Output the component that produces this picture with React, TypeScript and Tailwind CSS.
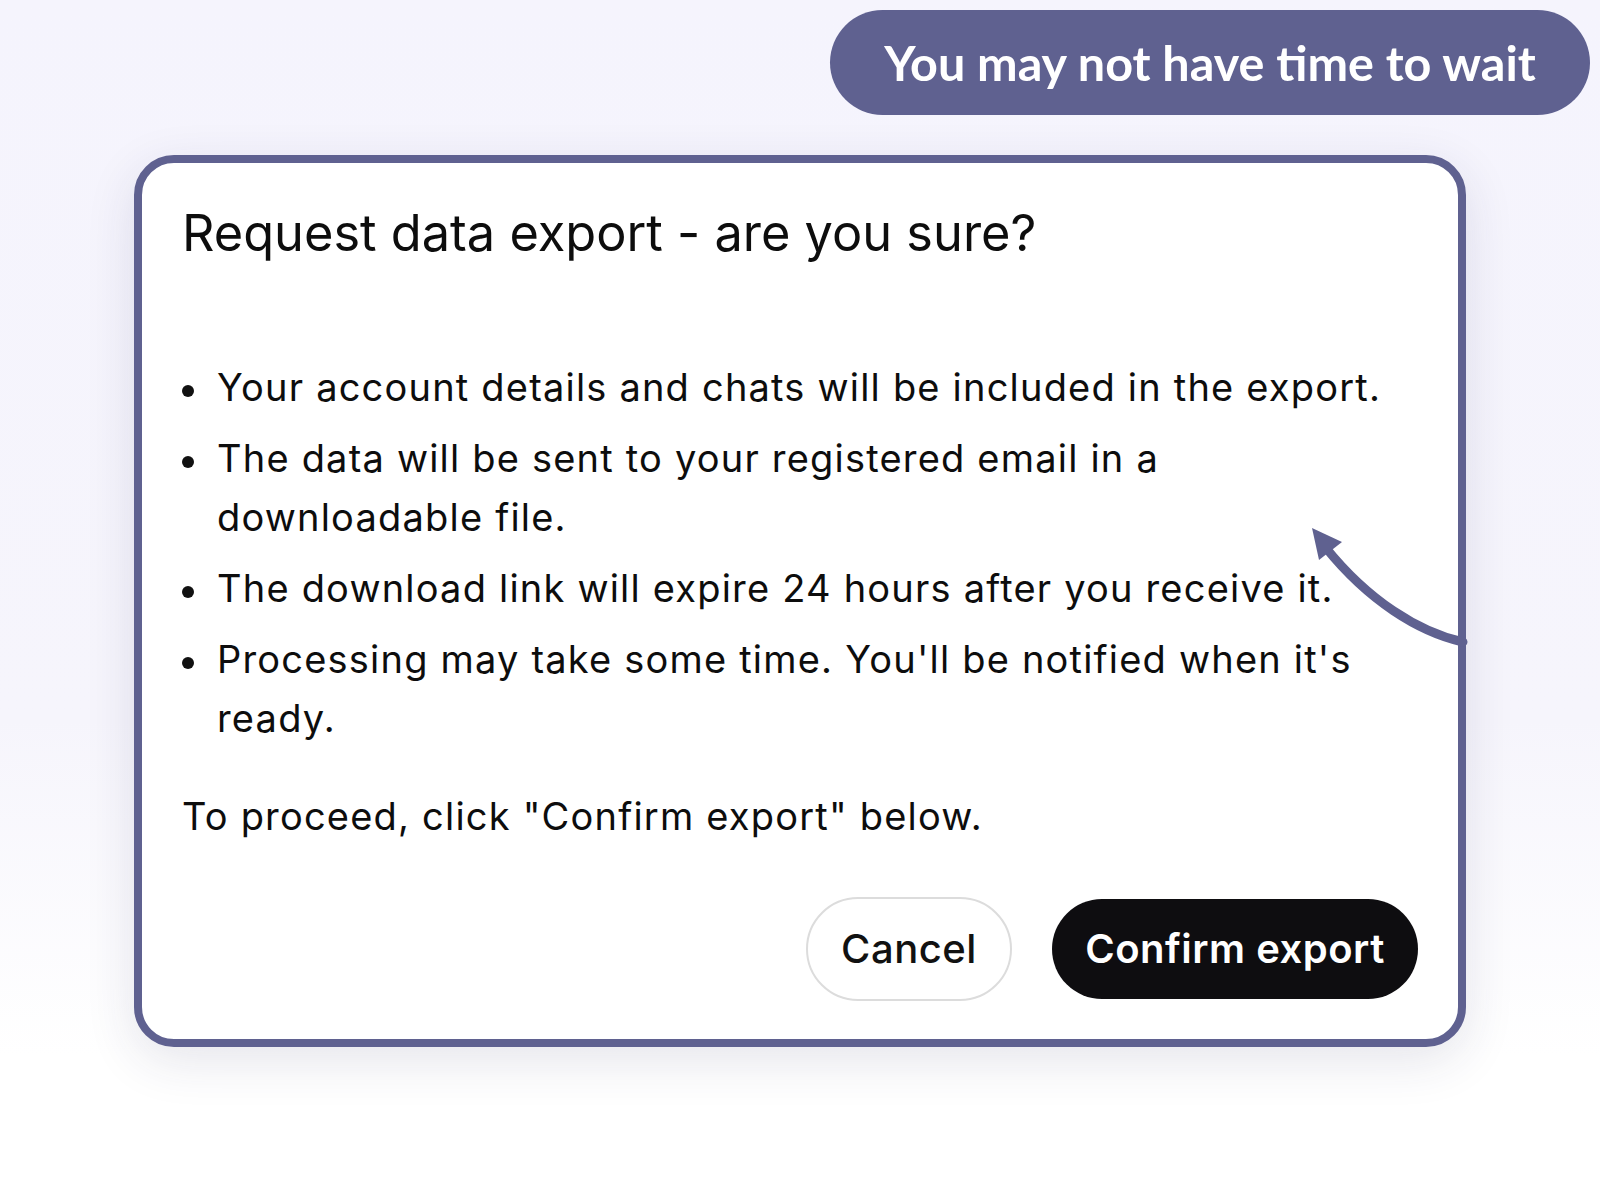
import React from 'react';

const bullets = [
  { text: 'Your account details and chats will be included in the export.', w: '' },
  { text: 'The data will be sent to your registered email in a downloadable file.', w: 'max-w-[960px]' },
  { text: 'The download link will expire 24 hours after you receive it.', w: '' },
  { text: "Processing may take some time. You'll be notified when it's ready.", w: 'max-w-[1160px]' },
];

export default function App() {
  return (
    <div className="relative w-[1600px] h-[1200px] overflow-hidden bg-[linear-gradient(to_bottom,#f5f4fd_0%,#f6f5fc_60%,#ffffff_88%)] font-['Inter',sans-serif]">
      <div className="flex justify-end pt-[10px] pr-[10px]">
        <div className="flex h-[105px] w-[760px] items-center justify-center rounded-full bg-[#5f6190] font-['Lato',sans-serif] text-[48.5px] font-bold text-white">
          You may not have time to wait
        </div>
      </div>

      <div className="ml-[134px] mt-[40px] w-[1332px] rounded-[40px] border-[8px] border-[#5f6190] bg-white px-[40px] pt-[40px] pb-[38px] shadow-[0_14px_50px_rgba(40,40,90,0.12)]">
        <h2 className="text-[50.5px] font-normal leading-[60px] text-[#0d0d0d]">
          Request data export - are you sure?
        </h2>

        <ul className="mt-[95px] flex w-[1215px] flex-col gap-[12px]">
          {bullets.map((b) => (
            <li key={b.text} className="flex text-[38px] leading-[59px] tracking-[1.2px] text-[#0d0d0d]">
              <span className="flex h-[59px] w-[35px] shrink-0 items-center">
                <span className="mt-[6px] h-[12px] w-[12px] rounded-full bg-[#111]" />
              </span>
              <span className={b.w}>{b.text}</span>
            </li>
          ))}
        </ul>

        <p className="mt-[39px] text-[38px] leading-[59px] tracking-[1.2px] text-[#0d0d0d]">
          To proceed, click "Confirm export" below.
        </p>

        <div className="mt-[51px] flex justify-end gap-[40px]">
          <button className="h-[104px] w-[206px] rounded-full border-2 border-[#dcdcdc] bg-white text-[40px] font-medium tracking-[0.5px] text-[#111]">
            Cancel
          </button>
          <button className="my-[2px] h-[100px] w-[366px] rounded-full bg-[#0e0d10] text-[40px] font-semibold tracking-[0.5px] text-white">
            Confirm export
          </button>
        </div>
      </div>

      <svg className="absolute left-[1290px] top-[510px]" width="190" height="150" viewBox="1290 510 190 150">
        <path d="M1463 642 C1418 632 1368 600 1326 548" fill="none" stroke="#5f6190" strokeWidth="9" strokeLinecap="round" />
        <polygon points="1312,528 1342,542 1319,560" fill="#5f6190" />
      </svg>
    </div>
  );
}
